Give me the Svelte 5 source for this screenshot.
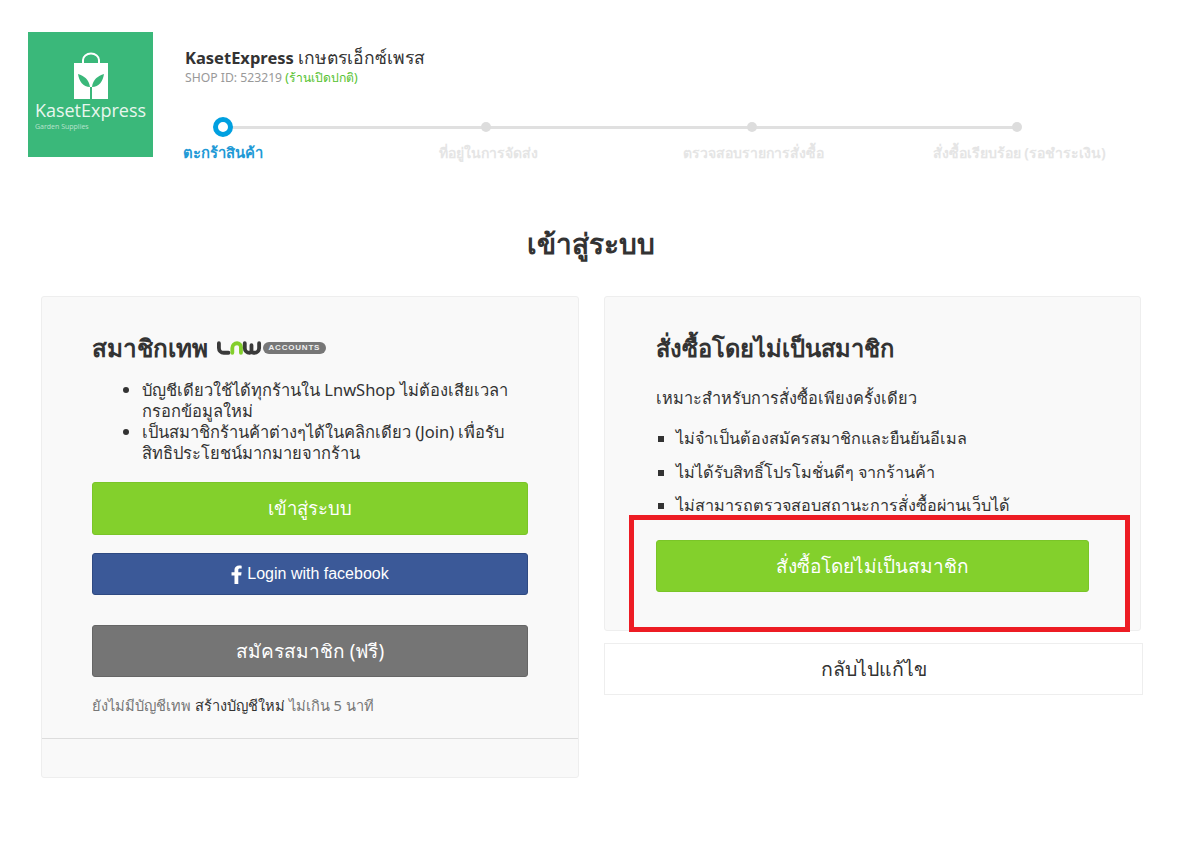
<script lang="ts">
	const steps = [
		{ label: 'ตะกร้าสินค้า', active: true },
		{ label: 'ที่อยู่ในการจัดส่ง', active: false },
		{ label: 'ตรวจสอบรายการสั่งซื้อ', active: false },
		{ label: 'สั่งซื้อเรียบร้อย (รอชำระเงิน)', active: false }
	];
	const memberPoints = [
		'บัญชีเดียวใช้ได้ทุกร้านใน LnwShop ไม่ต้องเสียเวลากรอกข้อมูลใหม่',
		'เป็นสมาชิกร้านค้าต่างๆได้ในคลิกเดียว (Join) เพื่อรับสิทธิประโยชน์มากมายจากร้าน'
	];
	const guestPoints = [
		'ไม่จำเป็นต้องสมัครสมาชิกและยืนยันอีเมล',
		'ไม่ได้รับสิทธิ์โปรโมชั่นดีๆ จากร้านค้า',
		'ไม่สามารถตรวจสอบสถานะการสั่งซื้อผ่านเว็บได้'
	];
</script>

<div class="page">
	<header class="shop">
		<div class="logo">
			<svg class="bag" viewBox="0 0 34 47" width="34" height="47" aria-hidden="true">
				<path d="M9 11V8a8 6.500 0 0 1 16 0v3" fill="none" stroke="#fff" stroke-width="2" />
				<path d="M0 11h34v36H0z" fill="#fff" />
				<path d="M17 47V35" stroke="#3ab87a" stroke-width="2" />
				<path d="M16 35C9 35 5 29 4 22c6 2 11 5 12 13zM18 35c7 0 11-6 12-13-6 2-11 5-12 13z" fill="#3ab87a" />
			</svg>
			<span class="logo-name">KasetExpress</span>
			<span class="logo-sub">Garden Supplies</span>
		</div>
		<div class="shop-info">
			<div class="shop-name"><b>KasetExpress</b> <span class="shop-thai">เกษตรเอ็กซ์เพรส</span></div>
			<div class="shop-id">SHOP ID: 523219 <span class="open">(ร้านเปิดปกติ)</span></div>
			<ol class="steps">
				{#each steps as step, i (i)}
					<li class="step" class:active={step.active} class:last={i === steps.length - 1}>
						<span class="dot"></span>
						<span class="step-label">{step.label}</span>
					</li>
				{/each}
			</ol>
		</div>
	</header>

	<h1>เข้าสู่ระบบ</h1>

	<main class="columns">
		<section class="card member">
			<div class="card-body">
				<h2>
					สมาชิกเทพ
					<svg class="lnw" viewBox="0 0 47 14" width="45" height="14" aria-hidden="true">
						<g fill="none" stroke-width="4" stroke-linecap="round" stroke-linejoin="round">
							<path d="M2 2v5a5 5 0 0 0 5 5h5" stroke="#3a3a3a" />
							<path d="M16 12V7a5 5 0 0 1 5-5h0a4 4 0 0 1 4 4v6" stroke="#83cf2c" />
							<path d="M29 2v5a5 5 0 0 0 5 5h0a2 2 0 0 0 2-2V4v6a2 2 0 0 0 2 2h1a5 5 0 0 0 5-5V2" stroke="#3a3a3a" />
						</g>
					</svg>
					<span class="accounts">ACCOUNTS</span>
				</h2>
				<ul class="round">
					{#each memberPoints as point, i (i)}
						<li>{point}</li>
					{/each}
				</ul>
				<button class="btn green tall">เข้าสู่ระบบ</button>
				<button class="btn facebook">
					<svg viewBox="0 0 10 18" width="11" height="19" aria-hidden="true">
						<path d="M6.700 18V10h2.700l.4-3.200H6.700V4.900c0-.9.3-1.500 1.600-1.500h1.600V.6C9.600.5 8.700.4 7.600.4 5 .4 3.100 1.900 3.100 4.500v2.300H.3V10h2.800v8z" fill="#fff" />
					</svg>
					Login with facebook
				</button>
				<button class="btn gray tall">สมัครสมาชิก (ฟรี)</button>
				<p class="hint">ยังไม่มีบัญชีเทพ <b>สร้างบัญชีใหม่</b> ไม่เกิน 5 นาที</p>
			</div>
			<div class="card-foot"></div>
		</section>

		<div class="guest-col">
			<section class="card guest">
				<h2>สั่งซื้อโดยไม่เป็นสมาชิก</h2>
				<p class="lead">เหมาะสำหรับการสั่งซื้อเพียงครั้งเดียว</p>
				<ul class="square">
					{#each guestPoints as point, i (i)}
						<li>{point}</li>
					{/each}
				</ul>
				<button class="btn green tall">สั่งซื้อโดยไม่เป็นสมาชิก</button>
				<div class="highlight"></div>
			</section>
			<button class="back">กลับไปแก้ไข</button>
		</div>
	</main>
</div>

<style>
	:global(body) {
		background: #fff;
	}
	.page {
		box-sizing: border-box;
		width: 1183px;
		height: 845px;
		overflow: hidden;
		padding: 32px 0 0 28px;
		font-family: Tahoma, 'Noto Sans', 'Liberation Sans', sans-serif;
		color: #333;
	}
	.shop {
		display: flex;
		gap: 32px;
	}
	.logo {
		flex: none;
		width: 125px;
		height: 125px;
		box-sizing: border-box;
		padding-top: 20px;
		background: #3ab87a;
		color: #e8f6ee;
		display: flex;
		flex-direction: column;
		align-items: center;
	}
	.logo-name {
		font-family: 'Open Sans', sans-serif;
		font-size: 18px;
		line-height: 20px;
		margin-top: 1px;
	}
	.logo-sub {
		font-family: 'Open Sans', sans-serif;
		font-size: 7px;
		line-height: 9px;
		align-self: flex-start;
		margin: 2px 0 0 7px;
		opacity: 0.7;
	}
	.shop-name {
		font-size: 16.500px;
		line-height: 20px;
		height: 20px;
		margin-top: 15px;
	}
	.shop-thai {
		font-size: 17.500px;
	}
	.shop-id {
		font-size: 12.200px;
		line-height: 18px;
		color: #999;
		margin-top: 2px;
	}
	.open {
		color: #55c22e;
	}
	.steps {
		list-style: none;
		margin: 30px 0 0 -95px;
		padding: 0;
		display: flex;
	}
	.step {
		width: 265.500px;
		position: relative;
		display: flex;
		flex-direction: column;
		align-items: center;
		height: 50px;
	}
	.step::after {
		content: '';
		position: absolute;
		left: 50%;
		width: 100%;
		top: 9px;
		height: 3px;
		background: #e0e0e0;
	}
	.step.last::after {
		display: none;
	}
	.dot {
		width: 10px;
		height: 10px;
		margin: 5px 4px 0 0;
		border-radius: 50%;
		background: #ddd;
		position: relative;
		z-index: 1;
	}
	.step-label {
		margin-top: 12px;
		font-size: 14px;
		line-height: 18px;
		font-weight: 700;
		color: #e5e5e5;
		white-space: nowrap;
	}
	.step.active .dot {
		box-sizing: border-box;
		width: 20px;
		height: 20px;
		margin: 0;
		background: #fff;
		border: 5px solid #00a0e0;
	}
	.step.active .step-label {
		margin-top: 6px;
		font-size: 14.800px;
		color: #1f9ad6;
	}
	h1 {
		margin: 60px 0 0 -28px;
		font-size: 28px;
		line-height: 32px;
		font-weight: 700;
		text-align: center;
		color: #333;
		width: 1181px;
	}
	.columns {
		display: flex;
		gap: 25px;
		margin: 37px 0 0 13px;
		align-items: flex-start;
	}
	.card {
		box-sizing: border-box;
		background: #f9f9f9;
		border: 1px solid #eee;
		border-radius: 3px;
	}
	.member {
		width: 538px;
		height: 482px;
		display: flex;
		flex-direction: column;
	}
	.card-body {
		flex: 1;
		padding: 36px 50px 0;
		display: flex;
		flex-direction: column;
	}
	.card-foot {
		height: 38px;
		border-top: 1px solid #ddd;
	}
	h2 {
		margin: 0;
		font-size: 23.700px;
		line-height: 30px;
		font-weight: 700;
		color: #333;
		display: flex;
		align-items: center;
	}
	.member h2 {
		font-size: 24.300px;
	}
	.lnw {
		margin-left: 9px;
	}
	.accounts {
		font-family: 'Liberation Sans', sans-serif;
		font-size: 8px;
		font-weight: 700;
		line-height: 12px;
		color: #f0f0f0;
		background: #777;
		border-radius: 6px;
		padding: 0 5.500px;
		margin-left: 1px;
		letter-spacing: 0.8px;
	}
	ul {
		margin: 0;
		padding: 0;
		font-size: 16.200px;
	}
	.round {
		margin-top: 16px;
		padding-left: 50px;
		font-size: 16.500px;
		line-height: 21px;
		list-style: disc;
	}
	.tall {
		height: 53px;
	}
	.btn {
		display: flex;
		align-items: center;
		justify-content: center;
		gap: 5px;
		width: 100%;
		border-radius: 3px;
		border: 1px solid transparent;
		color: #fff;
		font: inherit;
		font-size: 19px;
		cursor: pointer;
		padding: 0;
	}
	.green {
		background: #83d02c;
		border-color: #7ac528;
	}
	.member .green {
		margin-top: 19px;
		font-size: 18.500px;
	}
	.facebook {
		height: 42px;
		margin-top: 18px;
		background: #3b5998;
		border-color: #2f4a82;
		font-family: 'Liberation Sans', sans-serif;
		font-size: 16px;
	}
	.gray {
		margin-top: 30px;
		background: #757575;
		border-color: #666;
		height: 52px;
	}
	.hint {
		margin: 19px 0 0;
		font-size: 14.600px;
		line-height: 18px;
		color: #777;
	}
	.hint b {
		font-weight: 400;
		color: #333;
	}
	.guest-col {
		display: flex;
		flex-direction: column;
		gap: 12px;
		width: 539px;
	}
	.guest {
		width: 537px;
		height: 335px;
		padding: 36px 51px 0;
		position: relative;
	}
	.lead {
		margin: 23px 0 0;
		font-size: 16.300px;
		line-height: 24px;
	}
	.square {
		margin-top: 12px;
		padding-left: 20px;
		list-style: square;
		line-height: 33.500px;
	}
	.guest .green {
		margin-top: 17px;
		height: 52px;
	}
	.highlight {
		position: absolute;
		left: 24px;
		top: 218px;
		width: 501px;
		height: 117px;
		box-sizing: border-box;
		border: 5px solid #ed1c24;
	}
	.back {
		height: 52px;
		width: 539px;
		background: #fff;
		border: 1px solid #eee;
		font: inherit;
		font-size: 19.500px;
		color: #333;
		padding: 0;
	}
</style>
